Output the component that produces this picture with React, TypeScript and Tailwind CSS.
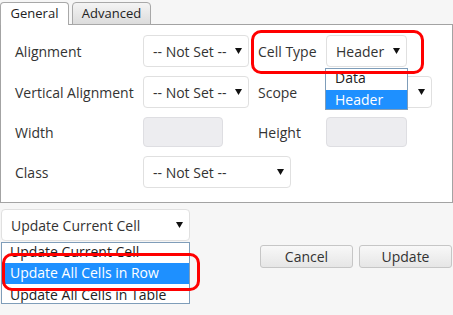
import React from "react"

const font = { fontFamily: '"Open Sans", "Liberation Sans", sans-serif' }

const Arrow = () => (
  <svg width="7" height="6" viewBox="0 0 7 6" className="shrink-0">
    <polygon points="0,0 7,0 3.5,6" fill="#111" />
  </svg>
)

type SelectProps = {
  value: string
  width: string
}

const Select = ({ value, width }: SelectProps) => (
  <div
    className={`${width} h-[32px] flex items-center justify-between pl-[9px] pr-[6px] bg-white border border-[#e0e0e0] rounded-[4px] text-[14px] text-[#333]`}
  >
    <span className="whitespace-nowrap">{value}</span>
    <Arrow />
  </div>
)

const Disabled = ({ width }: { width: string }) => (
  <div className={`${width} h-[30px] bg-[#ededf0] border border-[#dedee2] rounded-[4px]`} />
)

const Label = ({ text, width }: { text: string; width: string }) => (
  <div className={`${width} text-[14px] text-[#333] whitespace-nowrap`}>{text}</div>
)

export default function App() {
  return (
    <div className="relative w-[453px] h-[315px] overflow-hidden bg-[#f6f6f6]" style={font}>
      {/* tabs */}
      <div className="flex items-end h-[24px]">
        <div className="relative z-10 w-[69px] h-[23px] mb-[-1px] flex items-center justify-center bg-white border border-b-0 border-[#a8a8a8] rounded-t-[4px] text-[13px] text-[#222]">
          General
        </div>
        <div className="ml-[3px] w-[79px] h-[23px] mb-[-1px] flex items-center justify-center bg-gradient-to-b from-[#f4f4f4] to-[#dcdcdc] border border-[#a8a8a8] rounded-t-[4px] text-[13px] text-[#222]">
          Advanced
        </div>
      </div>

      {/* panel */}
      <div className="bg-white border border-[#a3a3a3] w-[453px] pt-[10px] pb-[14px] pl-[14px] flex flex-col gap-[9px]">
        <div className="flex items-center h-[32px]">
          <Label text="Alignment" width="w-[128px]" />
          <Select value="-- Not Set --" width="w-[106px]" />
          <Label text="Cell Type" width="w-[68px] ml-[9px]" />
          <Select value="Header" width="w-[81px]" />
        </div>
        <div className="flex items-center h-[32px]">
          <Label text="Vertical Alignment" width="w-[128px]" />
          <Select value="-- Not Set --" width="w-[106px]" />
          <Label text="Scope" width="w-[68px] ml-[9px]" />
          <Select value="" width="w-[106px]" />
        </div>
        <div className="flex items-center h-[30px]">
          <Label text="Width" width="w-[128px]" />
          <Disabled width="w-[80px]" />
          <Label text="Height" width="w-[68px] ml-[35px]" />
          <Disabled width="w-[81px]" />
        </div>
        <div className="flex items-center h-[32px]">
          <Label text="Class" width="w-[128px]" />
          <Select value="-- Not Set --" width="w-[148px]" />
        </div>
      </div>

      {/* bottom */}
      <div className="mt-[6px] ml-[1px]">
        <Select value="Update Current Cell" width="w-[189px]" />
      </div>
      <div className="flex justify-end gap-[6px] mt-[4px] pr-[1px]">
        <button className="w-[93px] h-[23px] bg-gradient-to-b from-[#f8f8f8] to-[#e6e6e6] border border-[#c6c6c6] rounded-[3px] text-[14px] text-[#333] leading-none">
          Cancel
        </button>
        <button className="w-[93px] h-[23px] bg-gradient-to-b from-[#f8f8f8] to-[#e6e6e6] border border-[#c6c6c6] rounded-[3px] text-[14px] text-[#333] leading-none">
          Update
        </button>
      </div>

      {/* open list: cell type */}
      <div className="absolute left-[325px] top-[68px] w-[83px] h-[42px] bg-white border border-[#7f9db9] overflow-hidden text-[14px] z-20">
        <div className="h-[21px] leading-[17px] pl-[9px] text-[#222]">Data</div>
        <div className="h-[21px] leading-[20px] pl-[9px] bg-[#1e90ff] text-white">Header</div>
      </div>

      {/* open list: update scope */}
      <div className="absolute left-[1px] top-[242px] w-[189px] h-[62px] bg-white border border-[#7f9db9] overflow-hidden text-[14px] z-20">
        <div className="h-[20px] leading-[17px] pl-[8px] text-[#222] whitespace-nowrap">Update Current Cell</div>
        <div className="h-[21px] leading-[20px] pl-[8px] bg-[#1e90ff] text-white whitespace-nowrap">Update All Cells in Row</div>
        <div className="h-[21px] leading-[22px] pl-[8px] text-[#222] whitespace-nowrap">Update All Cells in Table</div>
      </div>

      {/* highlight marks */}
      <div className="absolute left-[251px] top-[30px] w-[173px] h-[44px] border-[3px] border-[#ff0000] rounded-[10px] z-30" />
      <div className="absolute left-[2px] top-[253px] w-[198px] h-[38px] border-[3px] border-[#ff0000] rounded-[10px] z-30" />
    </div>
  )
}
